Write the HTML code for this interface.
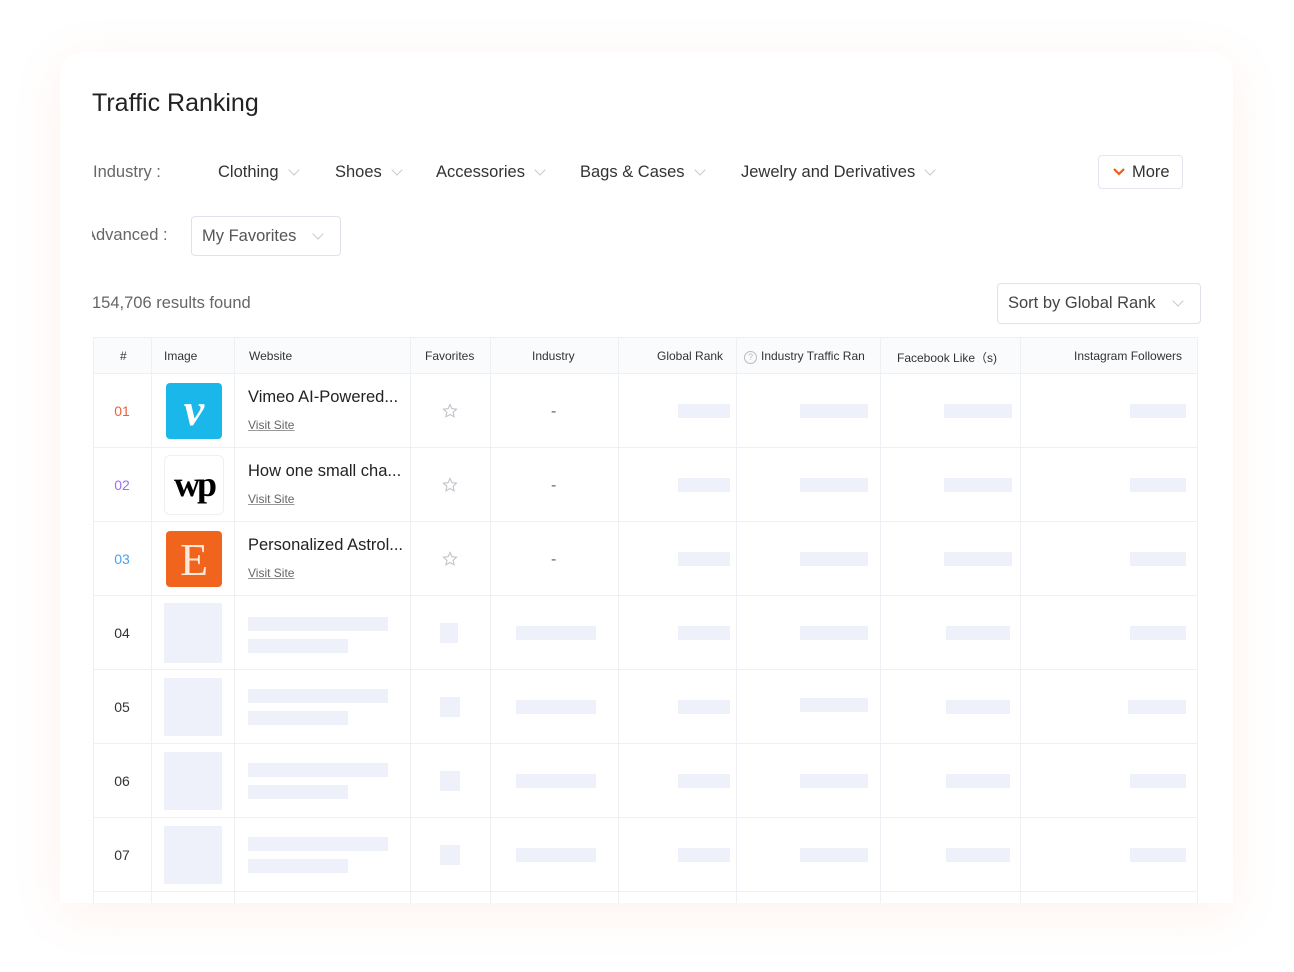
<!DOCTYPE html><html><head><style>
*{margin:0;padding:0;box-sizing:border-box}
body{width:1294px;height:972px;background:#fff;font-family:"Liberation Sans",sans-serif;color:#333;position:relative;overflow:hidden}
.card{position:absolute;left:60px;top:52px;width:1173px;height:851px;background:#fff;border-radius:22px 22px 0 0;box-shadow:0 10px 50px rgba(250,120,80,0.10);overflow:hidden}
.a{position:absolute}
.t{position:absolute;white-space:nowrap}
.chev{display:inline-block;width:8px;height:8px;border-right:1.5px solid #c5c9d3;border-bottom:1.5px solid #c5c9d3;transform:rotate(45deg);margin-left:11px;position:relative;top:-3px}
.sk{position:absolute;background:#eef1f9}
.vl{position:absolute;top:337px;width:1px;height:566px;background:#eef0f5}
.hl{position:absolute;left:93px;width:1104px;height:1px;background:#eef0f5}
.hd{position:absolute;top:349px;font-size:12px;color:#333}
.num{position:absolute;left:93px;width:58px;text-align:center;font-size:14px}
.vs{font-size:12px;color:#666;text-decoration:underline;text-decoration-color:#999}
.f16{font-size:16.5px}
</style></head><body>
<div class="card"></div>
<div class="t" style="left:92px;top:89px;font-size:25px;color:#222">Traffic Ranking</div>
<div class="t f16" style="left:93px;top:163px;color:#666">Industry :</div>
<div class="t f16" style="left:218px;top:163px">Clothing<span class="chev"></span></div>
<div class="t f16" style="left:335px;top:163px">Shoes<span class="chev"></span></div>
<div class="t f16" style="left:436px;top:163px">Accessories<span class="chev"></span></div>
<div class="t f16" style="left:580px;top:163px">Bags &amp; Cases<span class="chev"></span></div>
<div class="t f16" style="left:741px;top:163px">Jewelry and Derivatives<span class="chev"></span></div>
<div class="a" style="left:1098px;top:155px;width:85px;height:34px;border:1px solid #e3e6ee;border-radius:4px"></div>
<svg class="a" style="left:1112px;top:167px" width="14" height="10"><path d="M2 2 L7 7 L12 2" fill="none" stroke="#f05a1e" stroke-width="2.2"/></svg>
<div class="t f16" style="left:1132px;top:163px">More</div>
<div class="a" style="left:92px;top:222px;width:90px;height:26px;overflow:hidden"><div class="t f16" style="left:-7px;top:4px;color:#666">Advanced :</div></div>
<div class="a" style="left:191px;top:216px;width:150px;height:40px;border:1px solid #dfe2ea;border-radius:4px"></div>
<div class="t f16" style="left:202px;top:227px;color:#555">My Favorites<span class="chev" style="margin-left:18px"></span></div>
<div class="t f16" style="left:92px;top:294px;color:#666">154,706 results found</div>
<div class="a" style="left:997px;top:283px;width:204px;height:41px;border:1px solid #dfe2ea;border-radius:4px"></div>
<div class="t f16" style="left:1008px;top:294px;color:#444">Sort by Global Rank<span class="chev" style="margin-left:18px"></span></div>
<div class="a" style="left:93px;top:337px;width:1104px;height:37px;background:#fafbfd;border-top:1px solid #eef0f5"></div>
<div class="vl" style="left:93px"></div><div class="vl" style="left:151px"></div><div class="vl" style="left:234px"></div><div class="vl" style="left:410px"></div><div class="vl" style="left:490px"></div><div class="vl" style="left:618px"></div><div class="vl" style="left:736px"></div><div class="vl" style="left:880px"></div><div class="vl" style="left:1020px"></div><div class="vl" style="left:1197px"></div>
<div class="hl" style="top:373px"></div><div class="hl" style="top:447px"></div><div class="hl" style="top:521px"></div><div class="hl" style="top:595px"></div><div class="hl" style="top:669px"></div><div class="hl" style="top:743px"></div><div class="hl" style="top:817px"></div><div class="hl" style="top:891px"></div>
<div class="hd" style="left:120px">#</div><div class="hd" style="left:164px">Image</div><div class="hd" style="left:249px">Website</div><div class="hd" style="left:425px">Favorites</div><div class="hd" style="left:532px">Industry</div><div class="hd" style="left:657px">Global Rank</div>
<div class="hd" style="left:744px;color:#333"><span style="display:inline-block;width:13px;height:13px;border:1px solid #bbb;border-radius:50%;font-size:9px;text-align:center;line-height:11px;color:#bbb;margin-right:4px">?</span>Industry Traffic Ran</div>
<div class="hd" style="left:897px">Facebook Like（s)</div><div class="hd" style="left:1074px">Instagram Followers</div>
<div class="num" style="top:403px;color:#f25c3d">01</div>
<div class="num" style="top:477px;color:#9b6cff">02</div>
<div class="num" style="top:551px;color:#4aa0f5">03</div>
<div class="a" style="left:166px;top:383px;width:56px;height:56px;background:#1ab7ea;border-radius:4px;color:#fff;font:italic bold 46px 'Liberation Serif',serif;text-align:center;line-height:54px">v</div>
<div class="a" style="left:164px;top:455px;width:60px;height:60px;border:1px solid #eef0f5;border-radius:6px;background:#fff;color:#000;font:bold 36px 'Liberation Serif',serif;text-align:center;line-height:56px;letter-spacing:-3px">wp</div>
<div class="a" style="left:166px;top:531px;width:56px;height:56px;background:#f1641e;border-radius:4px;color:#fbe8d8;font:46px 'Liberation Serif',serif;text-align:center;line-height:58px">E</div>
<div class="t f16" style="left:248px;top:388px;color:#222">Vimeo AI-Powered...</div>
<div class="t vs" style="left:248px;top:418px">Visit Site</div>
<div class="t f16" style="left:248px;top:462px;color:#222">How one small cha...</div>
<div class="t vs" style="left:248px;top:492px">Visit Site</div>
<div class="t f16" style="left:248px;top:536px;color:#222">Personalized Astrol...</div>
<div class="t vs" style="left:248px;top:566px">Visit Site</div>
<svg class="a" style="left:442px;top:403px" width="16" height="16"><path d="M8 1.5l1.9 4.2 4.6.5-3.4 3.1 1 4.5L8 11.5 3.9 13.8l1-4.5L1.5 6.2l4.6-.5z" fill="none" stroke="#c0c4cc" stroke-width="1.1"/></svg>
<svg class="a" style="left:442px;top:477px" width="16" height="16"><path d="M8 1.5l1.9 4.2 4.6.5-3.4 3.1 1 4.5L8 11.5 3.9 13.8l1-4.5L1.5 6.2l4.6-.5z" fill="none" stroke="#c0c4cc" stroke-width="1.1"/></svg>
<svg class="a" style="left:442px;top:551px" width="16" height="16"><path d="M8 1.5l1.9 4.2 4.6.5-3.4 3.1 1 4.5L8 11.5 3.9 13.8l1-4.5L1.5 6.2l4.6-.5z" fill="none" stroke="#c0c4cc" stroke-width="1.1"/></svg>
<div class="t" style="left:551px;top:403px;color:#666">-</div><div class="t" style="left:551px;top:477px;color:#666">-</div><div class="t" style="left:551px;top:551px;color:#666">-</div>
<div class="sk" style="left:678px;top:404px;width:52px;height:14px"></div><div class="sk" style="left:800px;top:404px;width:68px;height:14px"></div><div class="sk" style="left:944px;top:404px;width:68px;height:14px"></div><div class="sk" style="left:1130px;top:404px;width:56px;height:14px"></div>
<div class="sk" style="left:678px;top:478px;width:52px;height:14px"></div><div class="sk" style="left:800px;top:478px;width:68px;height:14px"></div><div class="sk" style="left:944px;top:478px;width:68px;height:14px"></div><div class="sk" style="left:1130px;top:478px;width:56px;height:14px"></div>
<div class="sk" style="left:678px;top:552px;width:52px;height:14px"></div><div class="sk" style="left:800px;top:552px;width:68px;height:14px"></div><div class="sk" style="left:944px;top:552px;width:68px;height:14px"></div><div class="sk" style="left:1130px;top:552px;width:56px;height:14px"></div>
<div class="num" style="top:625px">04</div><div class="num" style="top:699px">05</div><div class="num" style="top:773px">06</div><div class="num" style="top:847px">07</div>
<div class="sk" style="left:164px;top:603px;width:58px;height:60px"></div><div class="sk" style="left:248px;top:617px;width:140px;height:14px"></div><div class="sk" style="left:248px;top:639px;width:100px;height:14px"></div><div class="sk" style="left:440px;top:623px;width:18px;height:20px"></div><div class="sk" style="left:516px;top:626px;width:80px;height:14px"></div><div class="sk" style="left:678px;top:626px;width:52px;height:14px"></div><div class="sk" style="left:800px;top:626px;width:68px;height:14px"></div><div class="sk" style="left:946px;top:626px;width:64px;height:14px"></div><div class="sk" style="left:1130px;top:626px;width:56px;height:14px"></div>
<div class="sk" style="left:164px;top:678px;width:58px;height:58px"></div><div class="sk" style="left:248px;top:689px;width:140px;height:14px"></div><div class="sk" style="left:248px;top:711px;width:100px;height:14px"></div><div class="sk" style="left:440px;top:697px;width:20px;height:20px"></div><div class="sk" style="left:516px;top:700px;width:80px;height:14px"></div><div class="sk" style="left:678px;top:700px;width:52px;height:14px"></div><div class="sk" style="left:800px;top:698px;width:68px;height:14px"></div><div class="sk" style="left:946px;top:700px;width:64px;height:14px"></div><div class="sk" style="left:1128px;top:700px;width:58px;height:14px"></div>
<div class="sk" style="left:164px;top:752px;width:58px;height:58px"></div><div class="sk" style="left:248px;top:763px;width:140px;height:14px"></div><div class="sk" style="left:248px;top:785px;width:100px;height:14px"></div><div class="sk" style="left:440px;top:771px;width:20px;height:20px"></div><div class="sk" style="left:516px;top:774px;width:80px;height:14px"></div><div class="sk" style="left:678px;top:774px;width:52px;height:14px"></div><div class="sk" style="left:800px;top:774px;width:68px;height:14px"></div><div class="sk" style="left:946px;top:774px;width:64px;height:14px"></div><div class="sk" style="left:1130px;top:774px;width:56px;height:14px"></div>
<div class="sk" style="left:164px;top:826px;width:58px;height:58px"></div><div class="sk" style="left:248px;top:837px;width:140px;height:14px"></div><div class="sk" style="left:248px;top:859px;width:100px;height:14px"></div><div class="sk" style="left:440px;top:845px;width:20px;height:20px"></div><div class="sk" style="left:516px;top:848px;width:80px;height:14px"></div><div class="sk" style="left:678px;top:848px;width:52px;height:14px"></div><div class="sk" style="left:800px;top:848px;width:68px;height:14px"></div><div class="sk" style="left:946px;top:848px;width:64px;height:14px"></div><div class="sk" style="left:1130px;top:848px;width:56px;height:14px"></div>
</body></html>
